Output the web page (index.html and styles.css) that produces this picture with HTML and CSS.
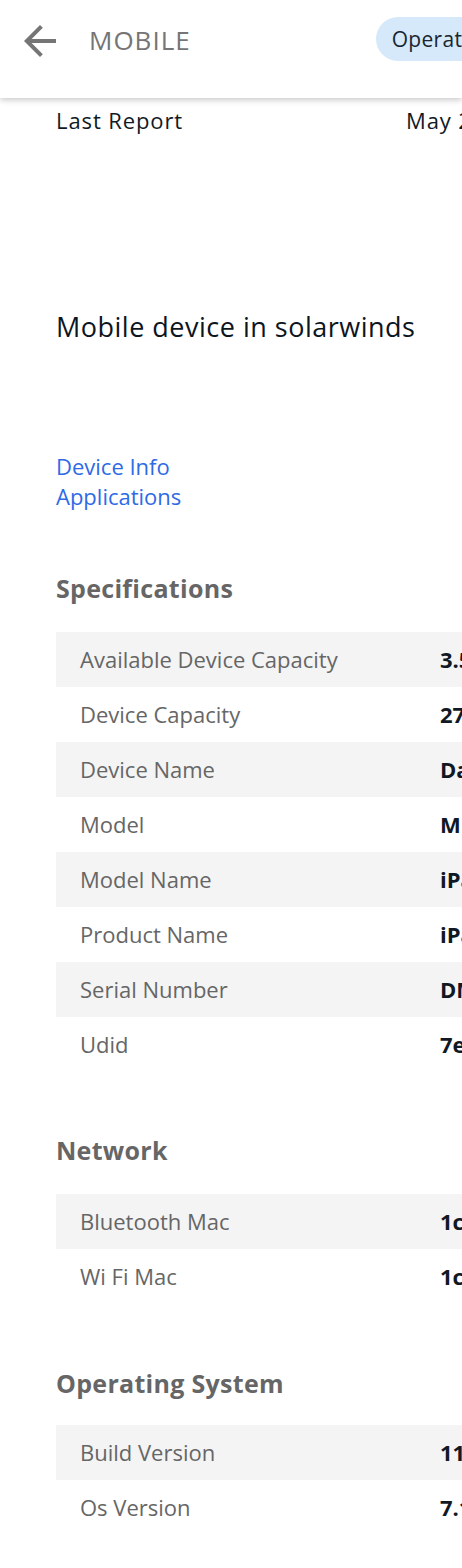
FILE: index.html
```html
<!DOCTYPE html>
<html lang="en">
<head>
<meta charset="utf-8">
<title>Mobile</title>
<link rel="stylesheet" href="styles.css">
</head>
<body>
<header class="topbar">
  <button class="back" aria-label="Back">
    <svg width="48" height="48" viewBox="0 0 24 24"><path fill="#757575" d="M20 11H7.83l5.59-5.59L12 4l-8 8 8 8 1.41-1.41L7.83 13H20v-2z"/></svg>
  </button>
  <h1 class="page-title">MOBILE</h1>
  <span class="status-pill">Operational</span>
</header>
<main class="content">
  <div class="report">
    <span class="report-label">Last Report</span>
    <span class="report-value">May 21, 2020 10:32 AM</span>
  </div>
  <p class="device-desc">Mobile device in solarwinds</p>
  <nav class="links">
    <a href="#" class="link">Device Info</a>
    <a href="#" class="link">Applications</a>
  </nav>

  <section class="group">
    <h2 class="group-title">Specifications</h2>
    <div class="table">
      <div class="row"><span class="key">Available Device Capacity</span><span class="val">3.5 GB</span></div>
      <div class="row"><span class="key">Device Capacity</span><span class="val">27 GB</span></div>
      <div class="row"><span class="key">Device Name</span><span class="val">Dave's iPad</span></div>
      <div class="row"><span class="key">Model</span><span class="val">MD785LL</span></div>
      <div class="row"><span class="key">Model Name</span><span class="val">iPad Air</span></div>
      <div class="row"><span class="key">Product Name</span><span class="val">iPad4,1</span></div>
      <div class="row"><span class="key">Serial Number</span><span class="val">DMPLK2ABFK10</span></div>
      <div class="row"><span class="key">Udid</span><span class="val">7e3b1c94a2f0</span></div>
    </div>
  </section>

  <section class="group group-net">
    <h2 class="group-title">Network</h2>
    <div class="table">
      <div class="row"><span class="key">Bluetooth Mac</span><span class="val">1c:ab:a7:01:22:3f</span></div>
      <div class="row"><span class="key">Wi Fi Mac</span><span class="val">1c:ab:a7:01:22:3e</span></div>
    </div>
  </section>

  <section class="group group-os">
    <h2 class="group-title">Operating System</h2>
    <div class="table">
      <div class="row"><span class="key">Build Version</span><span class="val">11D201</span></div>
      <div class="row"><span class="key">Os Version</span><span class="val">7.1.1</span></div>
    </div>
  </section>
</main>
</body>
</html>
```
FILE: styles.css
```css
html, body {
  margin: 0;
  padding: 0;
  overflow-x: hidden;
  background: #ffffff;
}
body {
  font-family: "Open Sans", "Noto Sans", sans-serif;
  color: #0f1720;
  width: 462px;
}
.topbar {
  height: 98px;
  display: flex;
  align-items: center;
  padding-left: 16px;
  box-shadow: 0 2px 6px rgba(0,0,0,0.22);
  background: #fff;
  position: relative;
  z-index: 1;
  white-space: nowrap;
}
.back {
  border: 0;
  background: none;
  padding: 0;
  width: 48px;
  height: 48px;
  display: flex;
  margin-top: -16px;
}
.page-title {
  margin: -18px 0 0 25px;
  font-size: 26px;
  font-weight: 400;
  color: #757575;
  letter-spacing: 1px;
}
.status-pill {
  margin: -20px 0 0 185px;
  height: 44px;
  line-height: 44px;
  padding: 0 16px;
  border-radius: 22px;
  background: #d5e9fa;
  font-size: 21px;
  letter-spacing: 0.3px;
  color: #1a2530;
  flex-shrink: 0;
}
.content {
  padding-left: 56px;
  width: 900px;
}
.report {
  display: flex;
  margin-top: 7px;
  font-size: 22px;
  letter-spacing: 0.9px;
  line-height: 30px;
  color: #111a24;
}
.report-label {
  width: 350px;
  flex-shrink: 0;
}
.report-value {
  white-space: nowrap;
}
.device-desc {
  margin: 174px 0 0;
  font-size: 27px;
  line-height: 36px;
  letter-spacing: 0.5px;
  color: #0d1520;
}
.links {
  display: flex;
  flex-direction: column;
  margin-top: 106px;
}
.link {
  font-size: 22px;
  line-height: 30px;
  color: #2e6ae6;
  text-decoration: none;
  align-self: flex-start;
}
.group {
  margin-top: 61px;
}
.group-net {
  margin-top: 62px;
}
.group-os {
  margin-top: 63px;
}
.group-title {
  margin: 0;
  font-size: 25px;
  line-height: 32px;
  font-weight: 700;
  letter-spacing: 0.3px;
  color: #666666;
}
.table {
  margin-top: 28px;
  width: 700px;
}
.group-net .table { margin-top: 28px; }
.group-os .table { margin-top: 26px; }
.row {
  display: flex;
  align-items: center;
  height: 55px;
  font-size: 22px;
  line-height: 28px;
  padding-bottom: 2px;
  box-sizing: border-box;
  white-space: nowrap;
}
.row:nth-child(odd) {
  background: #f4f4f4;
}
.key {
  width: 360px;
  padding-left: 24px;
  flex-shrink: 0;
  color: #666666;
}
.val {
  font-weight: 700;
  color: #101824;
}
```
